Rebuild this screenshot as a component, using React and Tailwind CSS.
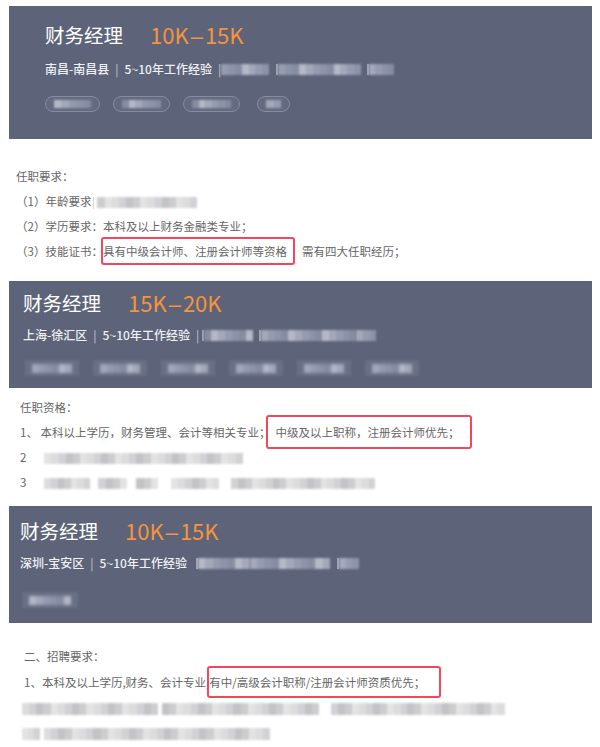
import React from 'react';

const DARK = ['bg-[#a3a8ba]', 'bg-[#8d93a8]', 'bg-[#b4b8c7]', 'bg-[#969cb0]', 'bg-[#868ca2]'];
const LIGHT = ['bg-[#cdcdcf]', 'bg-[#dcdcdc]', 'bg-[#c3c3c6]', 'bg-[#e3e3e3]', 'bg-[#d2d1d6]'];

// pixelated / blurred text placeholder
function Smudge({ w, h = 10, dark = false, className = '' }) {
  const shades = dark ? DARK : LIGHT;
  const n = Math.max(1, Math.round(w / 7));
  return (
    <span className={`inline-flex shrink-0 align-middle blur-[0.8px] ${className}`} style={{ width: w, height: h }}>
      {Array.from({ length: n }).map((_, i) => (
        <span key={i} className={`flex-1 ${shades[(i * 3 + (w % 5)) % shades.length]}`} />
      ))}
    </span>
  );
}

function Bar({ ml }) {
  return <span className="inline-block w-[2px] h-[11px] bg-[#9da2b5] blur-[0.5px] shrink-0" style={{ marginLeft: ml }} />;
}

function JobCard({ pad, metaGap, pillGap, salary, location, sep2, extras, pills, outlined }) {
  return (
    <div className={`ml-[9px] w-[583px] bg-[#5d6479] ${pad}`}>
      <div className="flex items-center h-[28px]">
        <span className="text-[19.5px] text-white">财务经理</span>
        <span className="ml-[27px] text-[22px] text-[#f7933b]">
          {salary[0]}
          <span className="font-['Liberation_Sans',sans-serif] mx-[2px]">–</span>
          {salary[1]}
        </span>
      </div>
      <div className={`flex items-center h-[18px] text-[12px] font-medium text-[#eef0f5] ${metaGap}`}>
        <span>{location}</span>
        <span className="mx-[6px] text-[#c3c7d3] font-normal">|</span>
        <span>5~10年工作经验</span>
        {sep2 && <span className="ml-[6px] text-[#c3c7d3] font-normal">|</span>}
        {extras.map((e, i) =>
          e.bar ? <Bar key={i} ml={e.ml} /> : <Smudge key={i} w={e.w} h={11} dark className="" />
        )}
      </div>
      <div className={`flex items-center h-[16px] ${pillGap}`}>
        {pills.map((p, i) =>
          outlined ? (
            <span
              key={i}
              className="inline-flex items-center justify-center h-[16px] rounded-full border border-[#858ba0] bg-[#646b80] shrink-0"
              style={{ width: p.w, marginLeft: p.ml }}
            >
              <Smudge w={p.w - 18} h={8} dark />
            </span>
          ) : (
            <span
              key={i}
              className="inline-flex items-center justify-center h-[16px] bg-[#687086] blur-[1px] shrink-0"
              style={{ width: p.w, marginLeft: p.ml }}
            >
              <Smudge w={p.w - 14} h={9} dark />
            </span>
          )
        )}
      </div>
    </div>
  );
}

export default function App() {
  return (
    <div className="w-[600px] min-h-[747px] bg-white pt-[6px] font-['Noto_Sans_CJK_SC','Noto_Sans',sans-serif]">
      <JobCard
        pad="pt-[15px] pb-[27px] pl-[36px]"
        metaGap="mt-[11px]"
        pillGap="mt-[18px]"
        salary={['10K', '15K']}
        location="南昌-南昌县"
        sep2
        extras={[
          { w: 48, ml: 11 },
          { bar: true, ml: 7 },
          { w: 83, ml: 6 },
          { bar: true, ml: 6 },
          { w: 25, ml: 14 },
        ]}
        pills={[
          { w: 55, ml: 0 },
          { w: 57, ml: 13 },
          { w: 57, ml: 13 },
          { w: 33, ml: 17 },
        ]}
        outlined
      />

      <div className="mt-[25px] pl-[16px] text-[11.5px] leading-[25px] text-[#666]">
        <div>任职要求：</div>
        <div>
          （1）年龄要求
          <span className="inline-block w-[1px] h-[12px] bg-[#d8d8d8] align-middle ml-[2px]" />
          <Smudge w={100} h={11} className="ml-[3px]" />
        </div>
        <div>（2）学历要求：本科及以上财务金融类专业；</div>
        <div>
          （3）技能证书：
          <span className="border-2 border-[#f1485d] rounded-[3px] -ml-[2px] pr-[6px] -mr-[8px] py-[4px]">
            具有中级会计师、注册会计师等资格
          </span>
          <span className="ml-[15px]">需有四大任职经历；</span>
        </div>
      </div>

      <div className="mt-[17px]">
        <JobCard
          pad="pt-[8px] pb-[12px] pl-[14px]"
          metaGap="mt-[9px]"
          pillGap="mt-[16px]"
          salary={['15K', '20K']}
          location="上海-徐汇区"
          sep2
          extras={[
            { bar: true, ml: 3 },
            { w: 49, ml: 6 },
            { bar: true, ml: 6 },
            { w: 95, ml: 6 },
            { w: 20, ml: 12 },
          ]}
          pills={[
            { w: 54, ml: 2 },
            { w: 54, ml: 14 },
            { w: 54, ml: 14 },
            { w: 54, ml: 14 },
            { w: 54, ml: 14 },
            { w: 54, ml: 14 },
          ]}
        />
      </div>

      <div className="mt-[7px] pl-[20px] text-[11.5px] leading-[25px] text-[#666]">
        <div>任职资格：</div>
        <div>
          1、 本科以上学历，财务管理、会计等相关专业；
          <span className="border-2 border-[#f1485d] rounded-[3px] -ml-[4px] pl-[7px] pr-[11px] -mr-[13px] py-[7px]">
            中级及以上职称，注册会计师优先；
          </span>
        </div>
        <div>
          2<Smudge w={198} h={11} className="ml-[18px]" />
        </div>
        <div>
          3<Smudge w={46} h={11} className="ml-[18px]" />
          <Smudge w={29} h={11} className="ml-[8px]" />
          <Smudge w={22} h={11} className="ml-[9px]" />
          <Smudge w={48} h={11} className="ml-[13px]" />
          <Smudge w={144} h={11} className="ml-[12px]" />
        </div>
      </div>

      <div className="mt-[11px]">
        <JobCard
          pad="pt-[11px] pb-[15px] pl-[11px]"
          metaGap="mt-[9px]"
          pillGap="mt-[20px]"
          salary={['10K', '15K']}
          location="深圳-宝安区"
          extras={[
            { bar: true, ml: 9 },
            { w: 52, ml: 8 },
            { w: 80, ml: 20 },
            { bar: true, ml: 7 },
            { w: 20, ml: 4 },
          ]}
          pills={[{ w: 56, ml: 2 }]}
        />
      </div>

      <div className="mt-[21px] pl-[24px] text-[11.5px] leading-[25.5px] text-[#666]">
        <div>二、招聘要求：</div>
        <div>
          1、本科及以上学历,财务、会计专业,
          <span className="border-2 border-[#f1485d] rounded-[3px] -ml-[2px] pr-[14px] -mr-[16px] py-[6px]">
            有中/高级会计职称/注册会计师资质优先；
          </span>
        </div>
        <div className="-ml-[2px]">
          <Smudge w={136} h={12} />
          <Smudge w={157} h={12} className="ml-[4px]" />
          <Smudge w={174} h={12} className="ml-[12px]" />
        </div>
        <div className="-ml-[2px]">
          <Smudge w={18} h={12} />
          <Smudge w={226} h={12} className="ml-[4px]" />
        </div>
      </div>
    </div>
  );
}
